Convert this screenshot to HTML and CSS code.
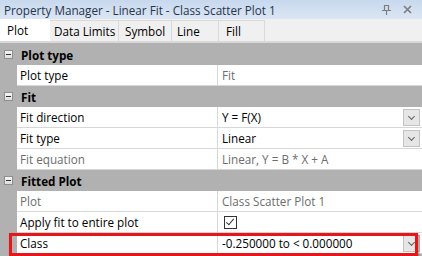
FILE: index.html
```html
<!DOCTYPE html>
<html lang="en">
<head>
    <meta charset="UTF-8">
    <title>Property Manager</title>
    <link rel="stylesheet" href="styles.css">
</head>
<body>

    <div class="panel">
        <!-- Title bar -->
        <div class="titlebar">
            <span class="title">Property Manager - Linear Fit - Class Scatter Plot 1</span>
            <div class="title-icons">
                <svg width="9" height="10" viewBox="0 0 9 10">
                    <path d="M2.5 0.5h4v5h-4z M0 5.5h9 M4.5 5.5v4.5" fill="none" stroke="#7d7d7d" stroke-width="1.2"/>
                </svg>
                <svg width="9" height="9" viewBox="0 0 9 9">
                    <path d="M1 1L8 8M8 1L1 8" stroke="#7d7d7d" stroke-width="1.6"/>
                </svg>
            </div>
        </div>

        <!-- Tabs -->
        <div class="tabs">
            <div class="tab active">Plot</div>
            <div class="tab">Data Limits</div>
            <div class="tab">Symbol</div>
            <div class="tab">Line</div>
            <div class="tab">Fill</div>
        </div>

        <!-- Property grid -->
        <div class="grid">
            <div class="cat"><span class="toggle"></span><span>Plot type</span></div>
            <div class="row">
                <div class="gutter"></div>
                <div class="name">Plot type</div>
                <div class="value muted">Fit</div>
            </div>

            <div class="cat"><span class="toggle"></span><span>Fit</span></div>
            <div class="row">
                <div class="gutter"></div>
                <div class="name">Fit direction</div>
                <div class="value">Y = F(X)<span class="drop"></span></div>
            </div>
            <div class="row">
                <div class="gutter"></div>
                <div class="name">Fit type</div>
                <div class="value">Linear<span class="drop"></span></div>
            </div>
            <div class="row">
                <div class="gutter"></div>
                <div class="name muted">Fit equation</div>
                <div class="value muted">Linear, Y = B * X + A</div>
            </div>

            <div class="cat"><span class="toggle"></span><span>Fitted Plot</span></div>
            <div class="row">
                <div class="gutter"></div>
                <div class="name muted">Plot</div>
                <div class="value muted">Class Scatter Plot 1</div>
            </div>
            <div class="row">
                <div class="gutter"></div>
                <div class="name">Apply fit to entire plot</div>
                <div class="value"><span class="check"></span></div>
            </div>
            <div class="row highlight">
                <div class="gutter"></div>
                <div class="name">Class</div>
                <div class="value">-0.250000 to &lt; 0.000000<span class="drop"></span></div>
            </div>
        </div>
    </div>

</body>
</html>
```

FILE: styles.css
```css
/* General Styles */
body {
    margin: 0;
    font-family: "Open Sans", "Noto Sans", sans-serif;
    font-size: 11.7px;
    color: #000;
}

.panel {
    width: 422px;
    height: 256px;
    overflow: hidden;
    background-color: #b1b1b1;
}

/* Title bar */
.titlebar {
    height: 19px;
    display: flex;
    align-items: center;
    justify-content: space-between;
    padding: 0 10px 0 4px;
    background: linear-gradient(#c8d8ed, #dbe6f4);
    color: #26354c;
    white-space: nowrap;
}

.title-icons {
    display: flex;
    align-items: center;
    gap: 12px;
}

/* Tabs */
.tabs {
    height: 22px;
    display: flex;
    background-color: #f0f0f0;
    border-bottom: 2px solid #d9d9d9;
}

.tab {
    box-sizing: border-box;
    padding-left: 5px;
    line-height: 20px;
    margin-top: 1px;
    border: 1px solid #d9d9d9;
    border-left: none;
    border-bottom: none;
    white-space: nowrap;
    overflow: hidden;
}

.tab.active {
    width: 50px;
    margin-top: 0;
    padding-left: 7px;
    background-color: #fff;
    border: none;
    line-height: 22px;
}

.tab:nth-child(2) { width: 69px; padding-left: 4px; }
.tab:nth-child(3) { width: 53px; padding-left: 6px; }
.tab:nth-child(4) { width: 47px; }
.tab:nth-child(5) { width: 46px; padding-left: 7px; }

/* Property grid */
.grid {
    margin-top: 1px;
}

.cat {
    height: 21px;
    display: flex;
    align-items: center;
    font-weight: bold;
    background-color: #b1b1b1;
}

.toggle {
    width: 7px;
    height: 7px;
    margin: 0 8px 0 4px;
    border: 1px solid #8f8f8f;
    background: linear-gradient(#f6f6f6, #dedede);
    position: relative;
}

.toggle::after {
    content: "";
    position: absolute;
    left: 1px;
    top: 3px;
    width: 5px;
    height: 1px;
    background-color: #333;
}

.row {
    height: 21px;
    display: grid;
    grid-template-columns: 17px 201px 1fr;
}

.row .name,
.row .value {
    background-color: #fff;
    border-bottom: 1px solid #d7d7d7;
    display: flex;
    align-items: center;
    padding-left: 3px;
    white-space: nowrap;
}

.row .name {
    border-right: 1px solid #d7d7d7;
}

.row .value {
    padding-left: 4px;
    padding-right: 2px;
}

.muted {
    color: #6d6d6d;
}

.drop {
    margin-left: auto;
    width: 15px;
    height: 15px;
    border: 1px solid #c3c3c3;
    background-color: #e6e6e6;
    position: relative;
}

.drop::after {
    content: "";
    position: absolute;
    left: 5px;
    top: 4px;
    width: 4px;
    height: 4px;
    border-right: 1px solid #606060;
    border-bottom: 1px solid #606060;
    transform: rotate(45deg);
}

.check {
    width: 11px;
    height: 11px;
    margin-left: 2px;
    border: 1px solid #333;
    background-color: #fff;
    position: relative;
}

.check::after {
    content: "";
    position: absolute;
    left: 3px;
    top: 0px;
    width: 3px;
    height: 7px;
    border-right: 1px solid #333;
    border-bottom: 1px solid #333;
    transform: rotate(40deg);
}

/* Annotation box over the Class row */
.highlight {
    position: relative;
}

.highlight::after {
    content: "";
    position: absolute;
    left: 9px;
    right: 4px;
    top: 0;
    height: 23px;
    border: 3px solid #e8161b;
    box-sizing: border-box;
    box-shadow: 1px 1px 2px rgba(0, 0, 0, 0.35);
}
```
